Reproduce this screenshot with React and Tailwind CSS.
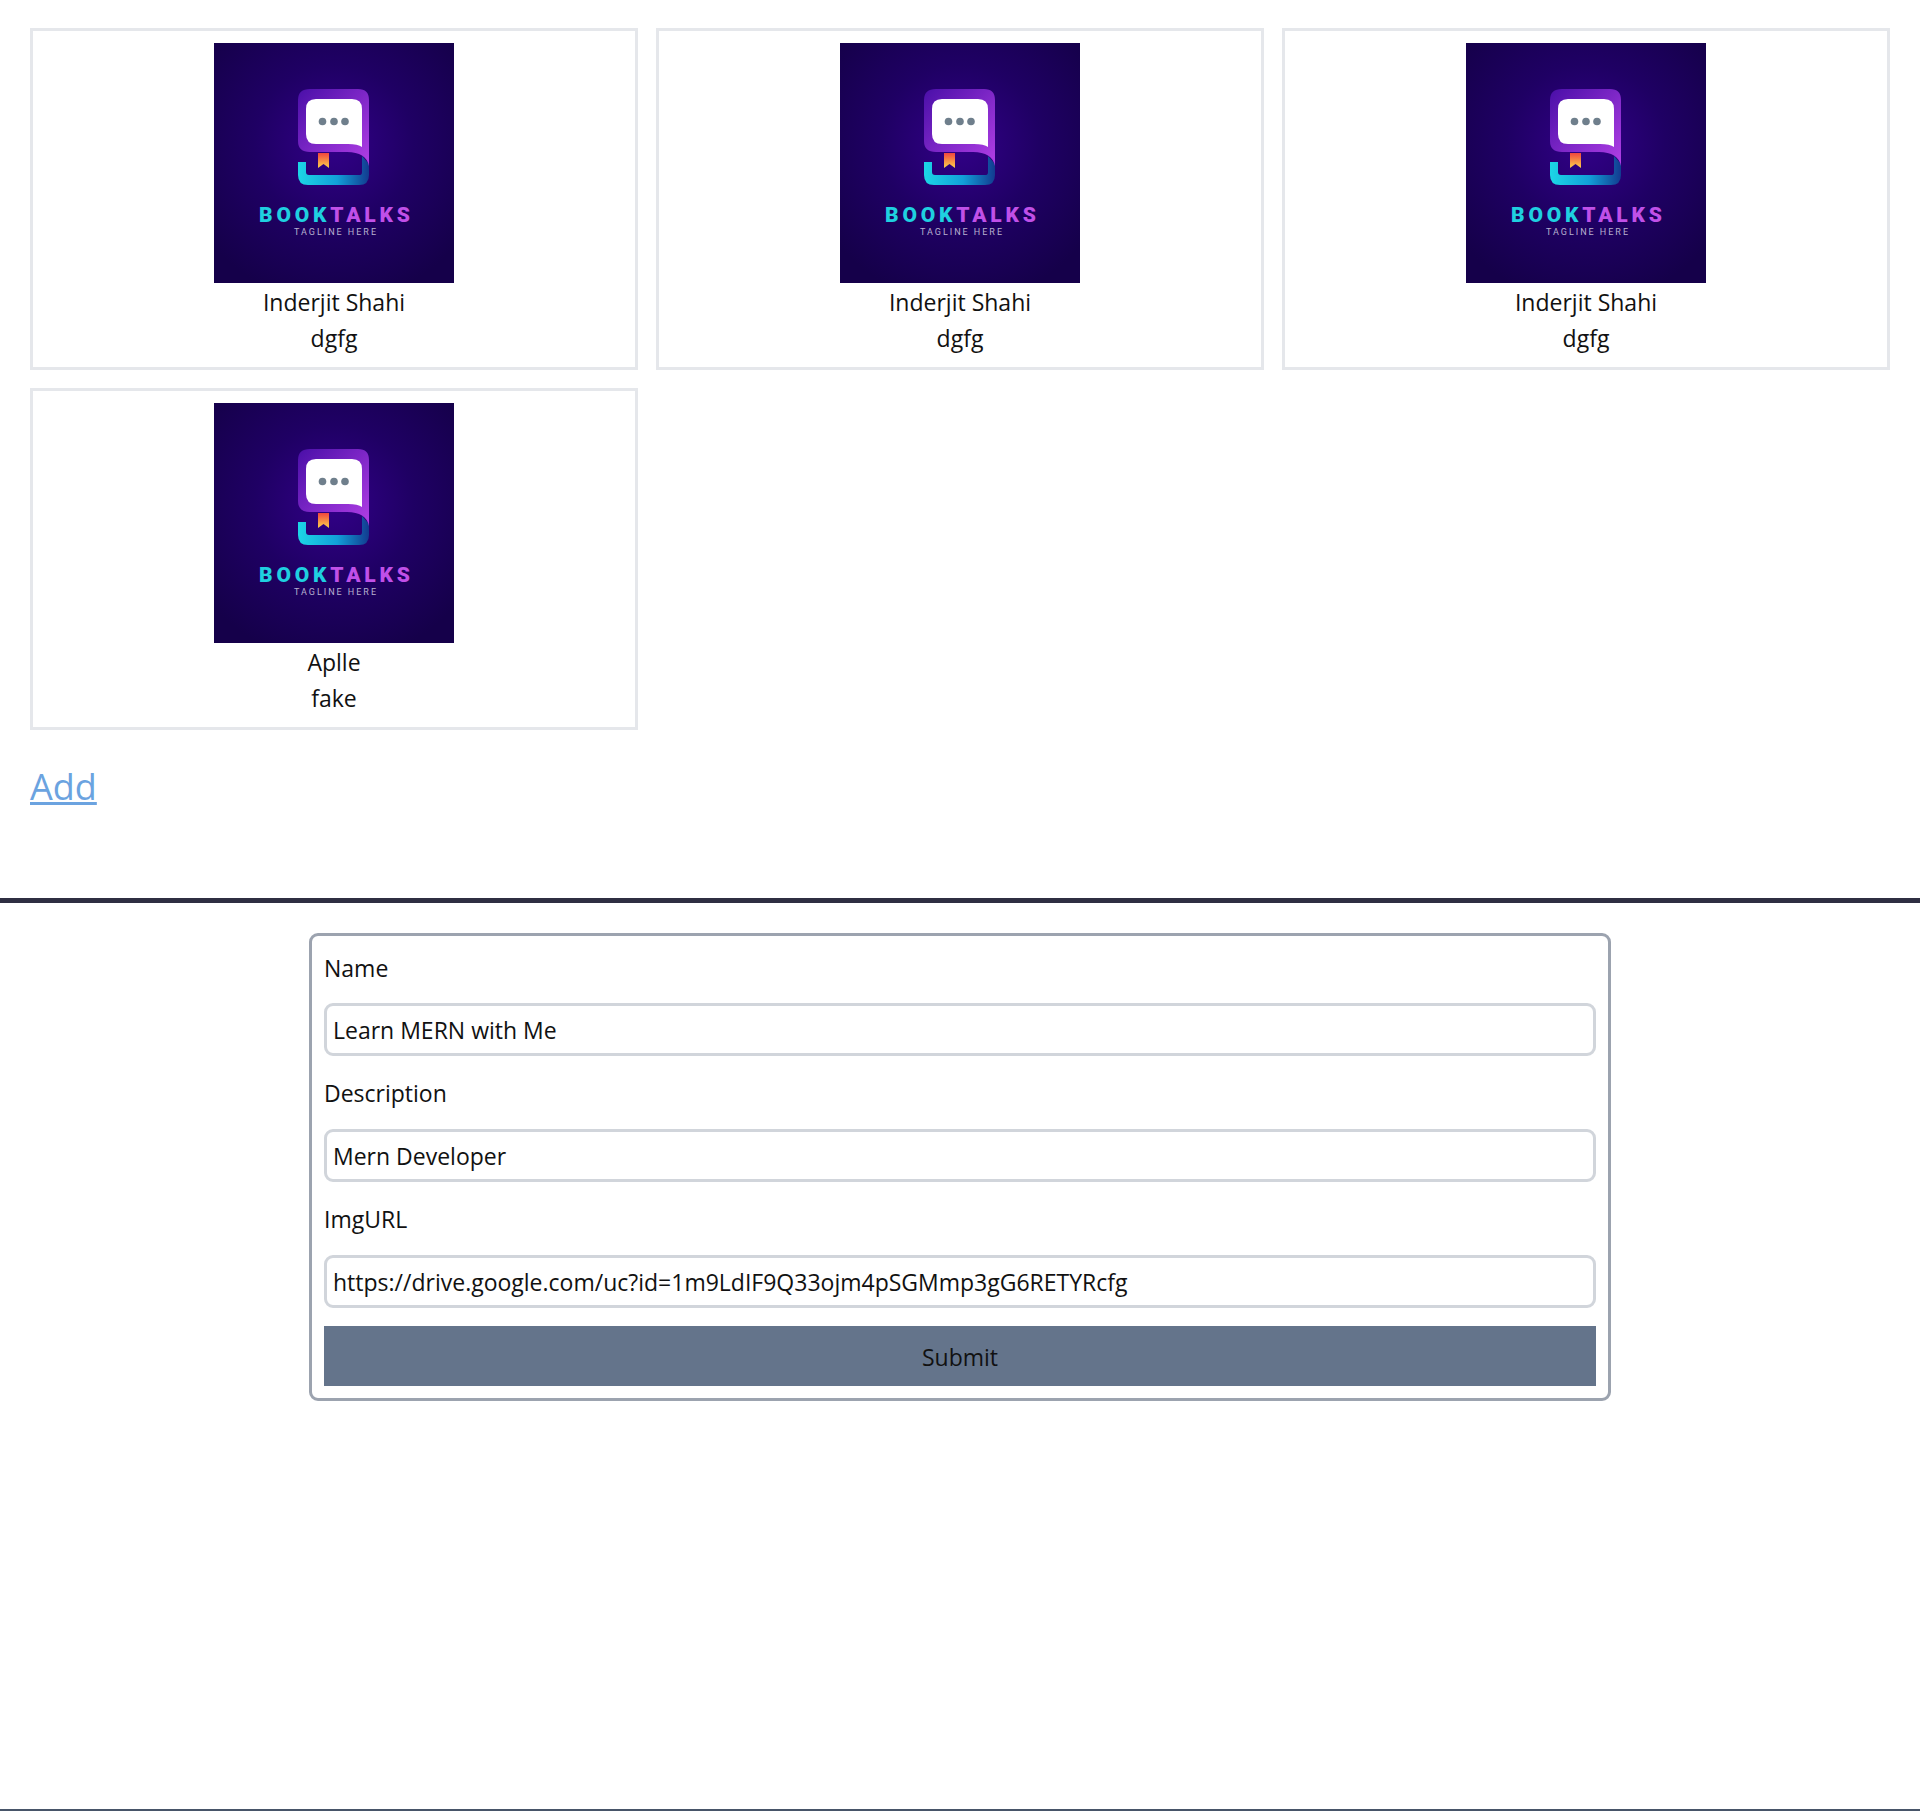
import React from 'react';

const cards = [
    { name: 'Inderjit Shahi', desc: 'dgfg' },
    { name: 'Inderjit Shahi', desc: 'dgfg' },
    { name: 'Inderjit Shahi', desc: 'dgfg' },
    { name: 'Aplle', desc: 'fake' },
];

// stands in for the logo picture on each card
function BookTalksLogo() {
    return (
        <svg className="block w-[240px] h-[240px]" viewBox="0 0 240 240">
            <defs>
                <radialGradient id="bg" cx="50%" cy="42%" r="66%">
                    <stop offset="0%" stopColor="#320088" />
                    <stop offset="50%" stopColor="#1f0064" />
                    <stop offset="100%" stopColor="#15004a" />
                </radialGradient>
                <linearGradient id="cover" x1="0" y1="0" x2="1" y2="1">
                    <stop offset="0%" stopColor="#4a0fa8" />
                    <stop offset="100%" stopColor="#b23fe6" />
                </linearGradient>
                <linearGradient id="base" x1="0" y1="0" x2="1" y2="0">
                    <stop offset="0%" stopColor="#1cd6e6" />
                    <stop offset="55%" stopColor="#12a0d8" />
                    <stop offset="100%" stopColor="#123a90" />
                </linearGradient>
                <linearGradient id="mark" x1="0" y1="0" x2="0" y2="1">
                    <stop offset="0%" stopColor="#f0453f" />
                    <stop offset="100%" stopColor="#fcd24a" />
                </linearGradient>
            </defs>
            <rect width="240" height="240" fill="url(#bg)" />
            <path d="M84 119h8v10q0 3 3 3h51q2 0 2-3v-16l7 8v11q0 10-10 10H94q-10 0-10-10z" fill="url(#base)" />
            <path d="M104 110h11v15l-5.500-4-5.500 4z" fill="url(#mark)" />
            <path d="M96 46h48q11 0 11 11v66q-3-14-22-14H96q-12 0-12-11V57q0-11 12-11z" fill="url(#cover)" />
            <path d="M102 56h36q10 0 10 10v38q-4-3-14-3h-32q-10 0-10-10V66q0-10 10-10z" fill="#ffffff" />
            <circle cx="108.500" cy="78.500" r="3.800" fill="#6f7f8c" />
            <circle cx="120" cy="78.500" r="3.800" fill="#6f7f8c" />
            <circle cx="131" cy="78.500" r="3.800" fill="#6f7f8c" />
            <text x="45" y="178.500" textLength="151" fontFamily="Roboto, sans-serif" fontWeight="900" fontSize="21" lengthAdjust="spacing">
                <tspan fill="#1fd0e0">BOOK</tspan>
                <tspan fill="#c050e8">TALKS</tspan>
            </text>
            <text x="80" y="192" textLength="82" fontFamily="Roboto, sans-serif" fontSize="9" fill="#b8b0d0">TAGLINE HERE</text>
        </svg>
    );
}

export default function App() {
    return (
        <div className="min-h-screen bg-white text-[23px] leading-[36px] text-[#111] border-b-2 border-[#475569] font-['Open_Sans',sans-serif]">
            <div className="px-[30px] pt-[28px]">
                <div className="grid grid-cols-3 gap-x-[18px] gap-y-[18px]">
                    {cards.map((card, i) => (
                        <div key={i} className="border-[3px] border-[#e5e7eb] pt-[12px] pb-[11px] flex flex-col items-center text-center">
                            <BookTalksLogo />
                            <p className="mt-[1px]">{card.name}</p>
                            <p>{card.desc}</p>
                        </div>
                    ))}
                </div>
                <a href="#add" className="block w-fit mt-[33px] text-[36px] leading-[48px] text-[#6ba3e0] underline">Add</a>
            </div>

            <hr className="mt-[87px] h-[5px] border-0 bg-[#2f2f42]" />

            {/* FORM */}
            <form className="w-[1302px] mx-auto mt-[30px] border-[3px] border-[#9ca3af] rounded-[9px] px-[12px] pt-[12px] pb-[12px]">
                <label className="block leading-[36px] mt-[2px]">Name</label>
                <input defaultValue="Learn MERN with Me" className="block w-full h-[53px] mt-[17px] px-[6px] border-[3px] border-[#d1d5db] rounded-[9px] outline-none" />
                <label className="block leading-[36px] mt-[19px]">Description</label>
                <input defaultValue="Mern Developer" className="block w-full h-[53px] mt-[18px] px-[6px] border-[3px] border-[#d1d5db] rounded-[9px] outline-none" />
                <label className="block leading-[36px] mt-[19px]">ImgURL</label>
                <input defaultValue="https://drive.google.com/uc?id=1m9LdIF9Q33ojm4pSGMmp3gG6RETYRcfg" className="block w-full h-[53px] mt-[18px] px-[6px] border-[3px] border-[#d1d5db] rounded-[9px] outline-none" />
                <button type="button" className="block w-full h-[60px] mt-[18px] pt-[2px] bg-[#64748b]">Submit</button>
            </form>
        </div>
    );
}
